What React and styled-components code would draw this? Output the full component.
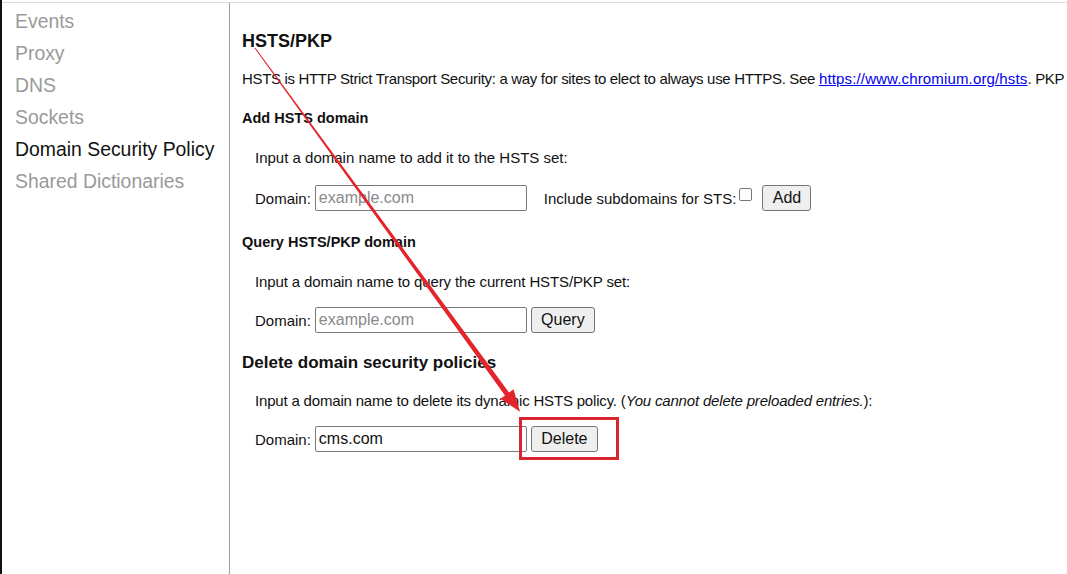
import React from 'react';
import styled, { createGlobalStyle } from 'styled-components';

const GlobalStyle = createGlobalStyle`
  html, body {
    margin: 0;
    padding: 0;
    background: #fff;
    overflow: hidden;
  }
  body {
    font-family: "Liberation Sans", Arial, sans-serif;
  }
`;

const Page = styled.div`
  position: relative;
  width: 1067px;
  height: 574px;
  box-sizing: border-box;
  padding-top: 2px;
  border-left: 2px solid #111;
  overflow: hidden;
`;

const Frame = styled.div`
  display: flex;
  height: 100%;
  border-top: 1px solid #dcdcdc;
`;

const Sidebar = styled.nav`
  width: 227px;
  flex-shrink: 0;
  border-right: 1px solid #a0a0a0;
  padding-top: 2px;
`;

const NavItem = styled.div`
  padding-left: 13px;
  height: 32px;
  line-height: 32px;
  font-size: 19.4px;
  font-family: "Liberation Sans", Arial, sans-serif;
  color: ${p => (p.$active ? '#111' : '#9a9a9a')};
  white-space: nowrap;
`;

const Main = styled.main`
  flex: 1;
  padding: 27px 0 0 12px;
  white-space: nowrap;
  overflow: hidden;
  font-size: 15px;
  color: #111;
`;

const Title = styled.h2`
  margin: 0;
  font-size: ${p => p.$size || 18}px;
  line-height: 22px;
  font-weight: bold;
  margin-top: ${p => p.$top || 0}px;
`;

const SubTitle = styled.h4`
  margin: ${p => p.$top}px 0 0;
  font-size: 14.5px;
  line-height: 20px;
  font-weight: bold;
`;

const Para = styled.p`
  margin: ${p => p.$top}px 0 0 ${p => (p.$indent ? 13 : 0)}px;
  line-height: 20px;
  letter-spacing: ${p => p.$tight || 0}px;
`;

const Link = styled.a`
  color: #0000ee;
  text-decoration: underline;
  letter-spacing: 0.15px;
`;

const FormRow = styled.div`
  display: flex;
  align-items: center;
  height: 26px;
  margin: ${p => p.$top}px 0 0 13px;
`;

const Label = styled.label`
  margin-right: ${p => p.$mr ?? 4}px;
  margin-left: ${p => p.$ml || 0}px;
`;

const Input = styled.input`
  box-sizing: border-box;
  width: 212px;
  height: 26px;
  border: 1px solid #7a7a7a;
  border-radius: 2px;
  padding: 0 3px;
  font-family: "Liberation Sans", Arial, sans-serif;
  font-size: 16px;
  color: #111;
  &::placeholder {
    color: #8a8a8a;
  }
`;

const Check = styled.span`
  display: inline-block;
  width: 11px;
  height: 11px;
  border: 1px solid #767676;
  border-radius: 2px;
  margin: -8px 10px 0 3px;
`;

const Button = styled.button`
  box-sizing: border-box;
  height: 26px;
  width: ${p => p.$w}px;
  margin-left: ${p => p.$ml ?? 4}px;
  padding: 0;
  border: 1px solid #767676;
  border-radius: 3px;
  background: #efefef;
  font-family: "Liberation Sans", Arial, sans-serif;
  font-size: 16px;
  color: #111;
`;

const Overlay = styled.svg`
  position: absolute;
  left: 0;
  top: 0;
  pointer-events: none;
`;

const navItems = ['Events', 'Proxy', 'DNS', 'Sockets', 'Domain Security Policy', 'Shared Dictionaries'];

export default function App() {
  return (
    <Page>
      <GlobalStyle />
      <Frame>
        <Sidebar>
          {navItems.map(n => (
            <NavItem key={n} $active={n === 'Domain Security Policy'}>{n}</NavItem>
          ))}
        </Sidebar>
        <Main>
          <Title>HSTS/PKP</Title>
          <Para $top={17} $tight={-0.33}>
            HSTS is HTTP Strict Transport Security: a way for sites to elect to always use HTTPS. See{' '}
            <Link href="#">https://www.chromium.org/hsts</Link>. PKP
          </Para>

          <SubTitle $top={19}>Add HSTS domain</SubTitle>
          <Para $top={20} $indent>Input a domain name to add it to the HSTS set:</Para>
          <FormRow $top={17}>
            <Label>Domain:</Label>
            <Input placeholder="example.com" />
            <Label $ml={17} $mr={0}>Include subdomains for STS:</Label>
            <Check />
            <Button $w={49} $ml={0}>Add</Button>
          </FormRow>

          <SubTitle $top={21}>Query HSTS/PKP domain</SubTitle>
          <Para $top={20} $indent $tight={-0.12}>Input a domain name to query the current HSTS/PKP set:</Para>
          <FormRow $top={15}>
            <Label>Domain:</Label>
            <Input placeholder="example.com" />
            <Button $w={64}>Query</Button>
          </FormRow>

          <Title $size={17} $top={19}>Delete domain security policies</Title>
          <Para $top={17} $indent $tight={-0.18}>
            Input a domain name to delete its dynamic HSTS policy. (<i>You cannot delete preloaded entries.</i>):
          </Para>
          <FormRow $top={15}>
            <Label>Domain:</Label>
            <Input defaultValue="cms.com" />
            <Button $w={67}>Delete</Button>
          </FormRow>
        </Main>
      </Frame>
      <Overlay width="1067" height="574" viewBox="0 0 1067 574">
        <polygon
          fill="#e3242b"
          points="252.6,48.3 253.4,47.7 507,392.5 511.5,389.3 518,411.8 498.5,398.7 503,395.5"
        />
        <rect x="518.5" y="418.5" width="97" height="40" fill="none" stroke="#d9262e" strokeWidth="3" />
      </Overlay>
    </Page>
  );
}
